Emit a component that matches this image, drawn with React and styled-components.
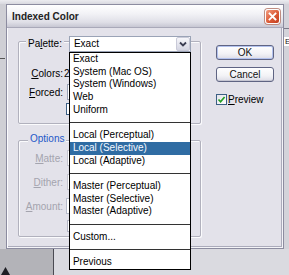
import React from 'react';
import styled, { createGlobalStyle } from 'styled-components';

const FONT = `"Liberation Sans", Arial, sans-serif`;
const FACE = '#e3e2ea';

const Global = createGlobalStyle`
  html, body { margin: 0; padding: 0; }
  body {
    width: 289px; height: 275px; overflow: hidden;
    background: #d6d6dc;
    font-family: ${FONT};
    font-size: 10px;
    color: #000;
  }
  * { box-sizing: border-box; }
`;

const Screen = styled.div`
  width: 289px;
  height: 275px;
  display: grid;
  grid-template-columns: 6px 278px 5px;
  grid-template-rows: 4px 245px 26px;
`;

const TopStrip = styled.div`
  grid-column: 1 / 4;
  background: linear-gradient(#ececf0, #d8d8df);
`;

const LeftStrip = styled.div`
  background: #cfcfd5;
  display: flex;
  flex-direction: column;
  padding-top: 54px;
`;

const Tick = styled.div`
  width: 5px;
  height: 1px;
  background: #555;
`;

const RightStrip = styled.div`
  background: #d3d3da;
  display: flex;
  flex-direction: column;
  padding-top: 24px;
`;

const HLine = styled.div`
  height: 1px;
  background: #7a7a88;
`;

const EBox = styled.div`
  margin-top: 8px;
  height: 9px;
  background: #fff;
  overflow: hidden;
  font-size: 8px;
  line-height: 9px;
  padding-left: 1px;
  color: #222;
`;

const BottomStrip = styled.div`
  grid-column: 1 / 4;
  display: grid;
  grid-template-columns: 53px 1px 1fr;
`;

const BottomDark = styled.div`
  background: #b3b3b8;
  display: flex;
  align-items: flex-end;
  padding-left: 1px;
`;

const BottomLine = styled.div`
  background: #4a4a52;
`;

const BottomLight = styled.div`
  background: #dadae0;
`;

const Dialog = styled.div`
  display: flex;
  flex-direction: column;
  border: 1px solid #8c8ca0;
  background: ${FACE};
  box-shadow: inset 1px 0 0 #fbfbfd, inset -1px -1px 0 #f4f4f8, inset -2px -2px 0 #ababbb;
`;

const TitleBar = styled.div`
  flex: none;
  height: 23px;
  display: flex;
  align-items: center;
  justify-content: space-between;
  padding: 0 3px 0 5px;
  background: linear-gradient(#ffffff 0%, #f2f2f6 40%, #dfdfe7 78%, #c7c7d3 100%);
  border-bottom: 1px solid #a9a9b9;
`;

const Title = styled.div`
  font-weight: bold;
  font-size: 10px;
  color: #222;
`;

const CloseBtn = styled.div`
  width: 15px;
  height: 15px;
  border-radius: 3px;
  border: 1px solid #fdfdfd;
  background: linear-gradient(135deg, #f29c80 0%, #dc5a36 55%, #c23e20 100%);
  box-shadow: 0 0 0 1px #c08c80;
  display: flex;
  align-items: center;
  justify-content: center;
`;

const Body = styled.div`
  flex: 1;
  display: flex;
  align-items: flex-start;
  padding: 13px 0 0 11px;
  gap: 15px;
`;

const LeftCol = styled.div`
  display: flex;
  flex-direction: column;
  gap: 16px;
`;

const GroupBox = styled.div`
  width: 183px;
  height: ${(p) => p.$h}px;
  border: 1px solid #b1b1bd;
  border-radius: 2px;
  box-shadow: 1px 1px 0 #fbfbfd, inset 1px 1px 0 #fbfbfd;
  display: flex;
  flex-direction: column;
`;

const GroupHeader = styled.div`
  display: flex;
  align-items: center;
  margin-top: ${(p) => p.$mt}px;
  padding-left: ${(p) => p.$pl}px;
`;

const Legend = styled.div`
  background: ${FACE};
  padding: 0 2px;
  line-height: 12px;
  color: ${(p) => (p.$blue ? '#2458c8' : '#000')};
`;

const U = styled.span`
  text-decoration: underline;
  text-underline-offset: 1px;
`;

const Combo = styled.div`
  position: relative;
  flex: none;
  width: ${(p) => p.$w}px;
  height: 16px;
  margin-left: ${(p) => p.$ml}px;
  border: 1px solid ${(p) => (p.$disabled ? '#c6c6d0' : '#9aa3b6')};
  background: #fff;
  display: flex;
  align-items: center;
  padding-left: 4px;
`;

const ComboText = styled.div`
  flex: 1;
  line-height: 14px;
  white-space: nowrap;
`;

const ComboArrow = styled.div`
  width: 14px;
  height: 14px;
  border-radius: 2px;
  border: 1px solid #c9cad8;
  background: linear-gradient(#f6f6fa, #d4d5e2);
  display: flex;
  align-items: center;
  justify-content: center;
`;

const List = styled.div`
  position: absolute;
  left: -1px;
  top: calc(100% + 1px);
  width: 122px;
  z-index: 10;
  background: #fff;
  border: 1px solid #000;
  display: flex;
  flex-direction: column;
`;

const Item = styled.div`
  height: 12.7px;
  line-height: 12.7px;
  padding-left: 3px;
  white-space: nowrap;
  overflow: hidden;
  background: ${(p) => (p.$sel ? '#2f6ca3' : 'transparent')};
  color: ${(p) => (p.$sel ? '#f4f8ff' : '#000')};
`;

const Sep = styled.div`
  height: 12.7px;
  display: flex;
  align-items: center;
  &::after {
    content: '';
    flex: 1;
    height: 1px;
    background: #333;
  }
`;

const FieldRow = styled.div`
  display: flex;
  align-items: center;
  height: ${(p) => p.$h || 16}px;
  margin-top: ${(p) => p.$mt}px;
`;

const FieldLabel = styled.div`
  flex: none;
  width: 44px;
  text-align: right;
  white-space: nowrap;
  color: ${(p) => (p.$disabled ? '#a4a4ae' : '#000')};
`;

const StaticValue = styled.div`
  margin-left: 1px;
`;

const TextField = styled.div`
  flex: none;
  width: ${(p) => p.$w}px;
  height: 16px;
  margin-left: ${(p) => p.$ml}px;
  border: 1px solid #b8bccb;
  background: #fff;
`;

const SmallCheck = styled.div`
  flex: none;
  width: 12px;
  height: 12px;
  margin-left: ${(p) => p.$ml}px;
  border: 1px solid ${(p) => (p.$disabled ? '#b4b6c4' : '#3c5f84')};
  background: #fff;
`;

const RightCol = styled.div`
  display: flex;
  flex-direction: column;
  padding-top: 4px;
`;

const Button = styled.div`
  width: 58px;
  height: 15px;
  margin-top: ${(p) => p.$mt || 0}px;
  border: 1px solid #5f6483;
  border-radius: 3px;
  background: linear-gradient(#ffffff, #f2f2f6 60%, #dcdce6);
  box-shadow: ${(p) => (p.$default ? 'inset 0 0 0 1px #b3c2ee' : 'inset 0 -1px 0 #c6c6d2')};
  display: flex;
  align-items: center;
  justify-content: center;
  line-height: 1;
  color: #111;
`;

const CheckRow = styled.div`
  display: flex;
  align-items: center;
  gap: 1px;
  margin-top: 12px;
  height: 11px;
`;

const CheckBox = styled.div`
  width: 11px;
  height: 11px;
  border: 1px solid #3c5f84;
  background: linear-gradient(135deg, #e4e4ea, #ffffff);
  display: flex;
  align-items: center;
  justify-content: center;
`;

const CheckLabel = styled.div`
  line-height: 11px;
`;

const paletteItems = [
  'Exact',
  'System (Mac OS)',
  'System (Windows)',
  'Web',
  'Uniform',
  '-',
  'Local (Perceptual)',
  'Local (Selective)',
  'Local (Adaptive)',
  '-',
  'Master (Perceptual)',
  'Master (Selective)',
  'Master (Adaptive)',
  '-',
  'Custom...',
  '-',
  'Previous',
];

function Chevron() {
  return (
    <svg width="8" height="6" viewBox="0 0 8 6">
      <path d="M1 1.5 L4 4.5 L7 1.5" fill="none" stroke="#3a3d52" strokeWidth="1.8" />
    </svg>
  );
}

export default function App() {
  return (
    <>
      <Global />
      <Screen>
        <TopStrip />
        <LeftStrip>
          <Tick />
        </LeftStrip>
        <Dialog>
          <TitleBar>
            <Title>Indexed Color</Title>
            <CloseBtn>
              <svg width="9" height="9" viewBox="0 0 9 9">
                <path d="M1.5 1.5 L7.5 7.5 M7.5 1.5 L1.5 7.5" stroke="#fff" strokeWidth="1.8" strokeLinecap="square" />
              </svg>
            </CloseBtn>
          </TitleBar>
          <Body>
            <LeftCol>
              <GroupBox $h={83}>
                <GroupHeader $mt={-6} $pl={7}>
                  <Legend>
                    Pa<U>l</U>ette:
                  </Legend>
                  <Combo $w={122} $ml={5}>
                    <ComboText>Exact</ComboText>
                    <ComboArrow>
                      <Chevron />
                    </ComboArrow>
                    <List>
                      {paletteItems.map((t, i) =>
                        t === '-' ? (
                          <Sep key={i} />
                        ) : (
                          <Item key={i} $sel={t === 'Local (Selective)'}>
                            {t}
                          </Item>
                        )
                      )}
                    </List>
                  </Combo>
                </GroupHeader>
                <FieldRow $mt={13}>
                  <FieldLabel>
                    <U>C</U>olors:
                  </FieldLabel>
                  <StaticValue>2</StaticValue>
                </FieldRow>
                <FieldRow $mt={3}>
                  <FieldLabel>
                    <U>F</U>orced:
                  </FieldLabel>
                  <Combo $w={100} $ml={4} />
                </FieldRow>
                <FieldRow $mt={2} $h={13}>
                  <FieldLabel />
                  <SmallCheck $ml={3} />
                </FieldRow>
              </GroupBox>
              <GroupBox $h={97}>
                <GroupHeader $mt={-8} $pl={9}>
                  <Legend $blue>Options</Legend>
                </GroupHeader>
                <FieldRow $mt={5}>
                  <FieldLabel $disabled>
                    <U>M</U>atte:
                  </FieldLabel>
                  <Combo $w={100} $ml={4} $disabled />
                </FieldRow>
                <FieldRow $mt={8}>
                  <FieldLabel $disabled>
                    <U>D</U>ither:
                  </FieldLabel>
                  <Combo $w={100} $ml={4} $disabled />
                </FieldRow>
                <FieldRow $mt={8}>
                  <FieldLabel $disabled>
                    <U>A</U>mount:
                  </FieldLabel>
                  <TextField $w={36} $ml={3} />
                </FieldRow>
                <FieldRow $mt={6} $h={12}>
                  <FieldLabel />
                  <SmallCheck $ml={4} $disabled />
                </FieldRow>
              </GroupBox>
            </LeftCol>
            <RightCol>
              <Button $default>OK</Button>
              <Button $mt={7}>Cancel</Button>
              <CheckRow>
                <CheckBox>
                  <svg width="9" height="9" viewBox="0 0 9 9">
                    <path d="M1.5 4.5 L3.6 6.8 L7.6 2" fill="none" stroke="#23a023" strokeWidth="1.7" />
                  </svg>
                </CheckBox>
                <CheckLabel>
                  <U>P</U>review
                </CheckLabel>
              </CheckRow>
            </RightCol>
          </Body>
        </Dialog>
        <RightStrip>
          <HLine />
          <EBox>E</EBox>
        </RightStrip>
        <BottomStrip>
          <BottomDark>
            <svg width="9" height="9" viewBox="0 0 9 9">
              <path d="M0 9 L4.5 1 L9 9 Z" fill="#1e1e24" />
            </svg>
          </BottomDark>
          <BottomLine />
          <BottomLight />
        </BottomStrip>
      </Screen>
    </>
  );
}
